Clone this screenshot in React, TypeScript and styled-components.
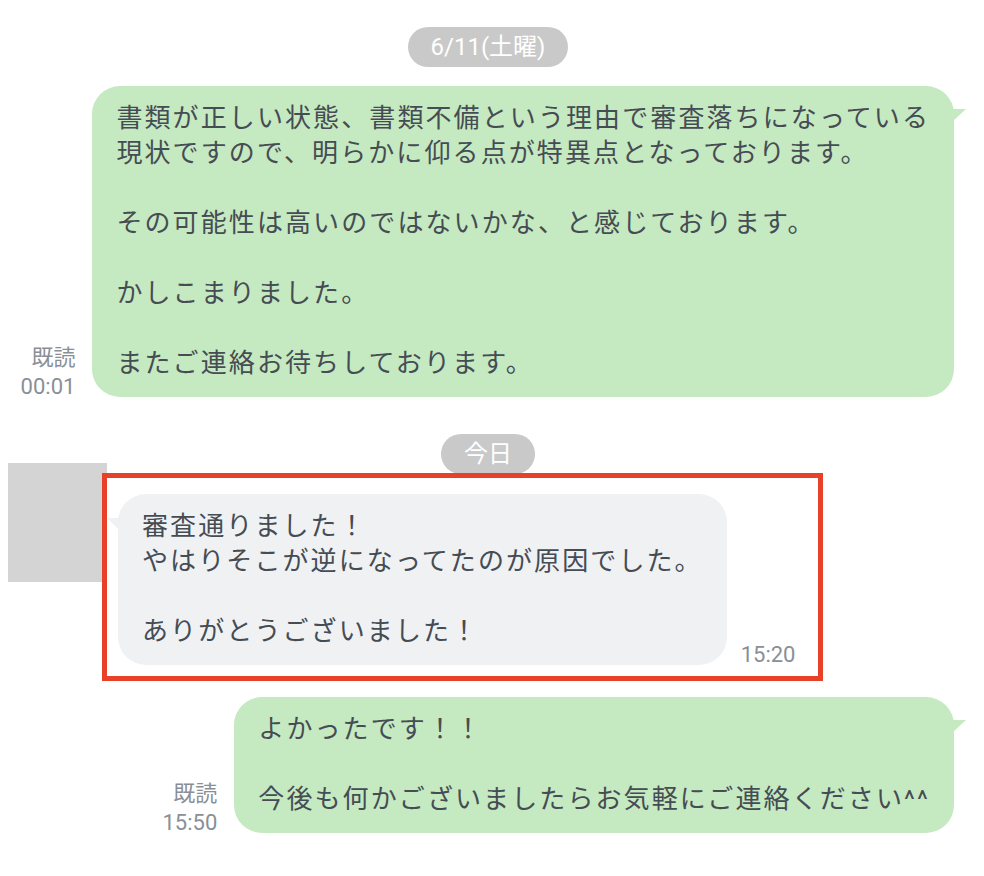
import React from 'react';
import styled, { createGlobalStyle } from 'styled-components';

const GlobalStyle = createGlobalStyle`
	body {
		margin: 0;
		background: #ffffff;
		font-family: Roboto, 'Noto Sans CJK JP', sans-serif;
	}
`;

type Side = 'sent' | 'received';

const firstMessage = `書類が正しい状態、書類不備という理由で審査落ちになっている
現状ですので、明らかに仰る点が特異点となっております。

その可能性は高いのではないかな、と感じております。

かしこまりました。

またご連絡お待ちしております。`;

const secondMessage = `審査通りました！
やはりそこが逆になってたのが原因でした。

ありがとうございました！`;

const thirdMessage = `よかったです！！

今後も何かございましたらお気軽にご連絡ください^^`;

const App: React.FC = () => {
	return (
		<>
			<GlobalStyle />
			<Chat>
				<DateRow $offset={0}>
					<DatePill>6/11(土曜)</DatePill>
				</DateRow>

				<SentRow $offset={19}>
					<Meta>
						<span>既読</span>
						<span>00:01</span>
					</Meta>
					<Bubble $side='sent'>{firstMessage}</Bubble>
				</SentRow>

				<DateRow $offset={37}>
					<DatePill>今日</DatePill>
				</DateRow>

				<ReceivedRow>
					<Avatar />
					<Highlight>
						<Bubble $side='received'>{secondMessage}</Bubble>
						<Time>15:20</Time>
					</Highlight>
				</ReceivedRow>

				<SentRow $offset={16}>
					<Meta>
						<span>既読</span>
						<span>15:50</span>
					</Meta>
					<Bubble $side='sent'>{thirdMessage}</Bubble>
				</SentRow>
			</Chat>
		</>
	);
};

export default App;

const Chat = styled.main`
	width: 976px;
	display: flex;
	flex-direction: column;
	padding: 27px 0 40px;
`;

const DateRow = styled.div<{ $offset: number }>`
	display: flex;
	justify-content: center;
	margin-top: ${({ $offset }) => $offset}px;
`;

const DatePill = styled.div`
	height: 40px;
	padding: 0 23px;
	border-radius: 20px;
	background: #c9c9c9;
	color: #ffffff;
	font-size: 24px;
	line-height: 40px;
`;

const SentRow = styled.div<{ $offset: number }>`
	display: flex;
	justify-content: flex-end;
	align-items: flex-end;
	gap: 17px;
	padding-right: 22px;
	margin-top: ${({ $offset }) => $offset}px;
`;

const Meta = styled.div`
	display: flex;
	flex-direction: column;
	align-items: flex-end;
	margin-bottom: -4px;
	color: #8a8f96;
	font-size: 22px;
	line-height: 29px;
`;

const Time = styled.span`
	margin-bottom: -4px;
	color: #8a8f96;
	font-size: 22px;
	line-height: 29px;
`;

const Bubble = styled.div<{ $side: Side }>`
	position: relative;
	padding: 15px 24px 16px;
	border-radius: 28px;
	background: ${({ $side }) => ($side === 'sent' ? '#c5e9c0' : '#f0f1f3')};
	color: #454c54;
	font-size: 26px;
	letter-spacing: 2.1px;
	line-height: 35px;
	white-space: pre;

	&::after {
		content: '';
		position: absolute;
		top: ${({ $side }) => ($side === 'sent' ? '23px' : '24px')};
		width: ${({ $side }) => ($side === 'sent' ? '14px' : '12px')};
		height: ${({ $side }) => ($side === 'sent' ? '13px' : '12px')};
		background: inherit;
		${({ $side }) =>
			$side === 'sent'
				? 'right: -12px; clip-path: polygon(0 0, 100% 0, 0 100%);'
				: 'left: -11px; clip-path: polygon(0 0, 100% 0, 100% 100%);'}
	}
`;

const ReceivedRow = styled.div`
	display: flex;
	align-items: flex-start;
	padding-left: 8px;
	margin-top: -11px;
`;

const Avatar = styled.div`
	width: 99px;
	height: 119px;
	flex-shrink: 0;
	background: #d4d4d4;
`;

const Highlight = styled.div`
	position: relative;
	display: flex;
	align-items: flex-end;
	gap: 14px;
	margin: 10px 0 0 -5px;
	padding: 16px 22px 11px 11px;
	border: 5px solid #e8412a;
`;
